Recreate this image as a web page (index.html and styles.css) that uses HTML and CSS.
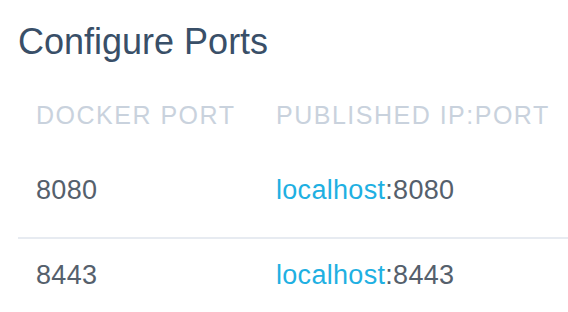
FILE: index.html
```html
<!DOCTYPE html>
<html>
<head>
<meta charset="utf-8">
<link rel="stylesheet" href="styles.css">
</head>
<body>
<div class="panel">
  <h1 class="title">Configure Ports</h1>
  <div class="ports">
    <div class="row head">
      <div class="cell">DOCKER PORT</div>
      <div class="cell">PUBLISHED IP:PORT</div>
    </div>
    <div class="row first">
      <div class="cell">8080</div>
      <div class="cell"><span class="host">localhost</span>:8080</div>
    </div>
    <div class="row second">
      <div class="cell">8443</div>
      <div class="cell"><span class="host">localhost</span>:8443</div>
    </div>
  </div>
</div>
</body>
</html>
```

FILE: styles.css
```css
html, body {
  margin: 0;
  padding: 0;
  background: #ffffff;
}
body {
  font-family: "Liberation Sans", Arial, sans-serif;
  width: 568px;
  height: 312px;
  overflow: hidden;
}
.panel {
  padding: 22px 0 0 18px;
}
.title {
  margin: 0;
  font-size: 36px;
  line-height: 40px;
  font-weight: normal;
  color: #394f68;
}
.ports {
  margin-top: 38px;
}
.row {
  display: grid;
  grid-template-columns: 240px 1fr;
  white-space: nowrap;
}
.cell {
  padding-left: 18px;
}
.head {
  font-size: 25px;
  line-height: 30px;
  letter-spacing: 1.5px;
  color: #c9d2dd;
}
.first, .second {
  font-size: 27px;
  line-height: 32px;
  letter-spacing: 0.3px;
  color: #55606c;
}
.first {
  padding: 44px 0 31px;
  border-bottom: 2px solid #e7ebf1;
}
.second {
  padding-top: 20px;
}
.host {
  color: #1fb0e2;
}
```
